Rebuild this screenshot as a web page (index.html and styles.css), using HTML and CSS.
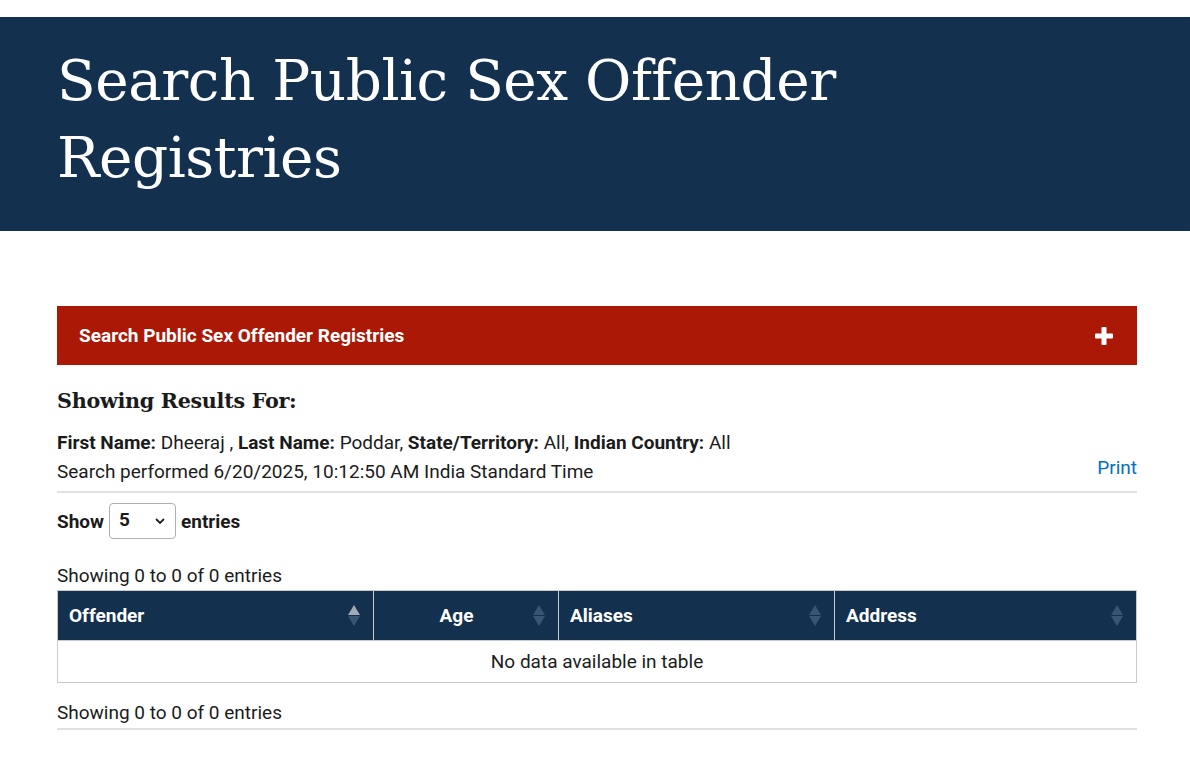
FILE: index.html
```html
<!DOCTYPE html>
<html>
<head>
<meta charset="utf-8">
<link rel="stylesheet" href="styles.css">
</head>
<body>
<header class="hero">
  <h1 class="hero-title">Search Public Sex Offender Registries</h1>
</header>
<main class="content">
  <div class="accordion">
    <span class="accordion-title">Search Public Sex Offender Registries</span>
    <svg class="plus" width="18" height="18" viewBox="0 0 18 18"><rect x="6.5" y="0" width="5" height="18" rx="1" fill="#fff"/><rect x="0" y="6.5" width="18" height="5" rx="1" fill="#fff"/></svg>
  </div>
  <h2 class="results-heading">Showing Results For:</h2>
  <div class="criteria-row">
    <div class="criteria">
      <div><b>First Name:</b> Dheeraj , <b>Last Name:</b> Poddar, <b>State/Territory:</b> All, <b>Indian Country:</b> All</div>
      <div>Search performed 6/20/2025, 10:12:50 AM India Standard Time</div>
    </div>
    <a class="print" href="#">Print</a>
  </div>
  <div class="length">
    <b>Show</b>
    <div class="select"><span>5</span><svg width="10" height="6" viewBox="0 0 10 6"><path d="M1 1l4 4 4-4" stroke="#222" stroke-width="1.8" fill="none"/></svg></div>
    <b>entries</b>
  </div>
  <div class="info top-info">Showing 0 to 0 of 0 entries</div>
  <table class="grid">
    <thead>
      <tr>
        <th class="c-off">Offender<span class="sort asc"><i class="up"></i><i class="down"></i></span></th>
        <th class="c-age center">Age<span class="sort"><i class="up"></i><i class="down"></i></span></th>
        <th class="c-ali">Aliases<span class="sort"><i class="up"></i><i class="down"></i></span></th>
        <th class="c-adr">Address<span class="sort"><i class="up"></i><i class="down"></i></span></th>
      </tr>
    </thead>
    <tbody>
      <tr><td colspan="4" class="empty">No data available in table</td></tr>
    </tbody>
  </table>
  <div class="info bottom-info">Showing 0 to 0 of 0 entries</div>
</main>
</body>
</html>
```
FILE: styles.css
```css
* { box-sizing: border-box; }
body {
  margin: 0;
  padding-top: 17px;
  font-family: Roboto, "Liberation Sans", sans-serif;
  font-size: 19px;
  color: #1b1b1b;
  background: #fff;
}
.hero {
  background: #13304f;
  height: 214px;
  padding: 25px 57px 0;
}
.hero-title {
  margin: 0;
  font-family: "DejaVu Serif", "Liberation Serif", serif;
  font-weight: normal;
  font-size: 56.5px;
  line-height: 77px;
  color: #fff;
  max-width: 840px;
  letter-spacing: -0.5px;
}
.content {
  padding: 75px 53px 0 57px;
}
.accordion {
  height: 59px;
  background: #ab1906;
  display: flex;
  align-items: center;
  justify-content: space-between;
  padding: 0 24px 0 22px;
}
.accordion-title {
  color: #fff;
  font-weight: bold;
  font-size: 19px;
}
.results-heading {
  margin: 22px 0 0;
  font-family: "DejaVu Serif", serif;
  font-weight: bold;
  font-size: 20.7px;
  line-height: 28px;
  color: #1b1b1b;
  letter-spacing: -0.3px;
}
.criteria-row {
  display: flex;
  justify-content: space-between;
  align-items: flex-end;
  margin-top: 13px;
  padding-bottom: 5px;
  border-bottom: 2px solid #dfe1e2;
  line-height: 29px;
}
.criteria b { font-weight: bold; }
.print {
  color: #0071bc;
  text-decoration: none;
  line-height: 29px;
  margin-bottom: 4px;
}
.length {
  display: flex;
  align-items: center;
  gap: 5px;
  margin-top: 10px;
}
.select {
  width: 67px;
  height: 36px;
  border: 1px solid #adb0b3;
  border-radius: 4px;
  display: flex;
  align-items: center;
  justify-content: space-between;
  padding: 0 10px 0 9px;
  font-weight: bold;
}
.select span { margin-top: -4px; }
.info { line-height: 24px; }
.top-info { margin-top: 25px; }
.grid {
  width: 100%;
  border-collapse: collapse;
  margin-top: 2px;
}
.grid th {
  background: #13304f;
  color: #fff;
  height: 50px;
  text-align: left;
  font-weight: bold;
  font-size: 19px;
  padding: 0 12px 0 11px;
  border: 1px solid #c9cbcd;
  position: relative;
}
.grid th.center { text-align: center; padding-right: 30px; }
.c-off { width: 316px; }
.c-age { width: 185px; }
.c-ali { width: 276px; }
.sort {
  position: absolute;
  right: 13px;
  top: 14px;
  display: flex;
  flex-direction: column;
  gap: 1px;
}
.sort i {
  width: 0; height: 0;
  border-left: 6px solid transparent;
  border-right: 6px solid transparent;
  display: block;
}
.sort .up { border-bottom: 10px solid #3a5473; }
.sort .down { border-top: 10px solid #3a5473; }
.sort.asc .up { border-bottom-color: #a1aab5; }
.sort.asc .down { border-top-color: #3a5473; }
.empty {
  text-align: center;
  height: 42px;
  border: 1px solid #c9cbcd;
  padding: 0;
}
.bottom-info {
  margin-top: 18px;
  padding-bottom: 3px;
  border-bottom: 2px solid #dfe1e2;
}
```
